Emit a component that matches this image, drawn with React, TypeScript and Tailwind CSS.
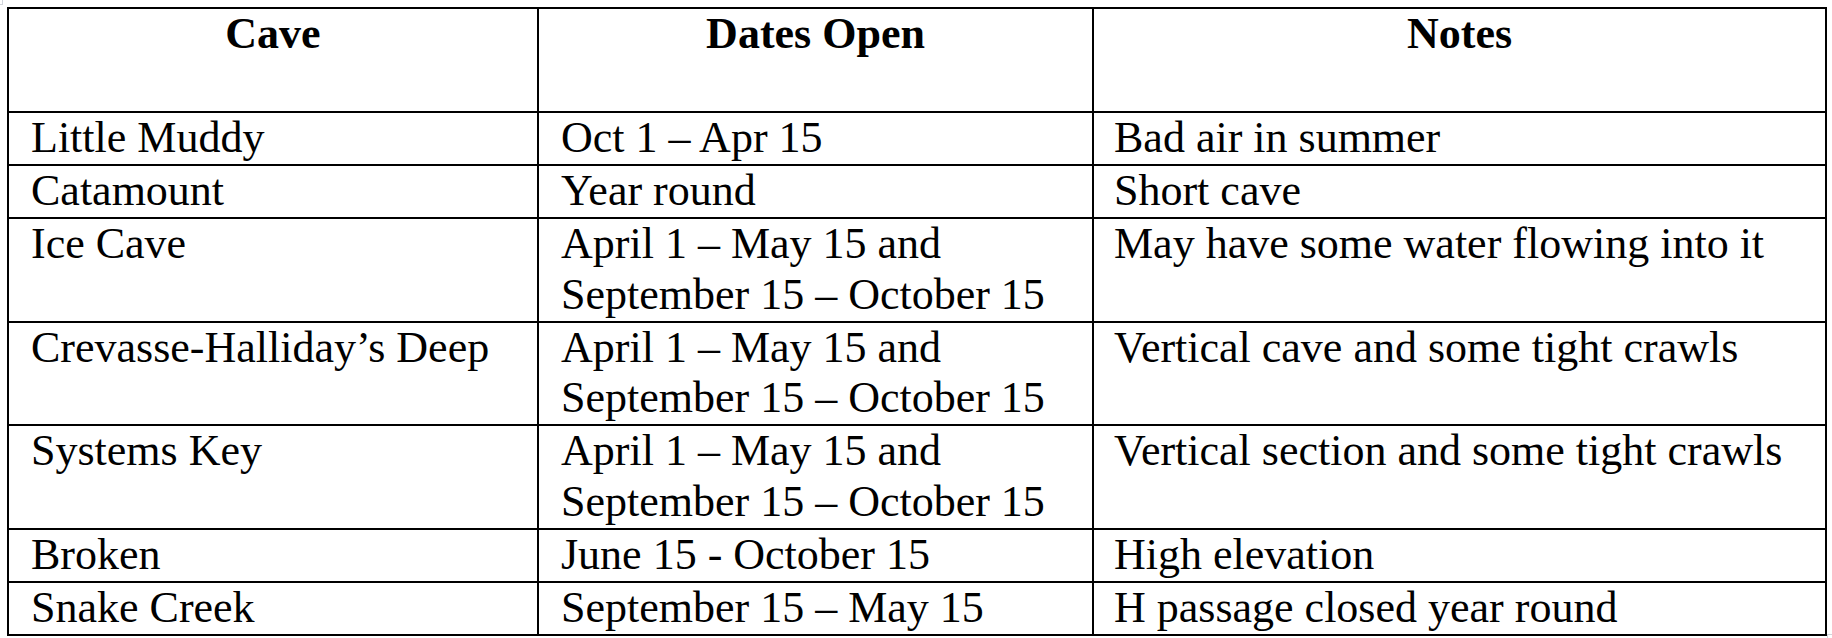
import React from 'react';

type Row = { cave: string; dates: string[]; notes: string };

const rows: Row[] = [
  { cave: 'Little Muddy', dates: ['Oct 1 – Apr 15'], notes: 'Bad air in summer' },
  { cave: 'Catamount', dates: ['Year round'], notes: 'Short cave' },
  {
    cave: 'Ice Cave',
    dates: ['April 1 – May 15 and', 'September 15 – October 15'],
    notes: 'May have some water flowing into it',
  },
  {
    cave: 'Crevasse-Halliday’s Deep',
    dates: ['April 1 – May 15 and', 'September 15 – October 15'],
    notes: 'Vertical cave and some tight crawls',
  },
  {
    cave: 'Systems Key',
    dates: ['April 1 – May 15 and', 'September 15 – October 15'],
    notes: 'Vertical section and some tight crawls',
  },
  { cave: 'Broken', dates: ['June 15 - October 15'], notes: 'High elevation' },
  { cave: 'Snake Creek', dates: ['September 15 – May 15'], notes: 'H passage closed year round' },
];

const headers = ['Cave', 'Dates Open', 'Notes'];

export default function App() {
  return (
    <div className="relative w-[1832px] h-[638px] bg-white overflow-hidden font-['Liberation_Serif',serif] text-black">
      {/* page corner marks */}
      <div className="absolute left-0 top-0 w-[3px] h-[5px] border-r border-b border-gray-300"></div>
      <div className="absolute left-[1827px] top-[634px] w-[5px] h-[4px] border-l border-t border-gray-300"></div>

      <div className="pl-[7px] pt-[7px]">
        <table className="table-fixed border-collapse w-[1818px] text-[44px] leading-[50.5px]">
          <colgroup>
            <col className="w-[530px]" />
            <col className="w-[555px]" />
            <col className="w-[733px]" />
          </colgroup>
          <thead>
            <tr>
              {headers.map((h) => (
                <th
                  key={h}
                  className="border-2 border-black px-[22px] pt-0 pb-[1px] align-top text-center font-bold"
                >
                  <div>{h}</div>
                  <div>&nbsp;</div>
                </th>
              ))}
            </tr>
          </thead>
          <tbody>
            {rows.map((r) => (
              <tr key={r.cave}>
                <td className="border-2 border-black pl-[22px] pr-2 pt-0 pb-[0.5px] align-top whitespace-nowrap">
                  {r.cave}
                </td>
                <td className="border-2 border-black pl-[22px] pr-2 pt-0 pb-[0.5px] align-top whitespace-nowrap">
                  {r.dates.map((d) => (
                    <div key={d}>{d}</div>
                  ))}
                </td>
                <td className="border-2 border-black pl-[20px] pr-2 pt-0 pb-[0.5px] align-top whitespace-nowrap">
                  {r.notes}
                </td>
              </tr>
            ))}
          </tbody>
        </table>
      </div>
    </div>
  );
}
